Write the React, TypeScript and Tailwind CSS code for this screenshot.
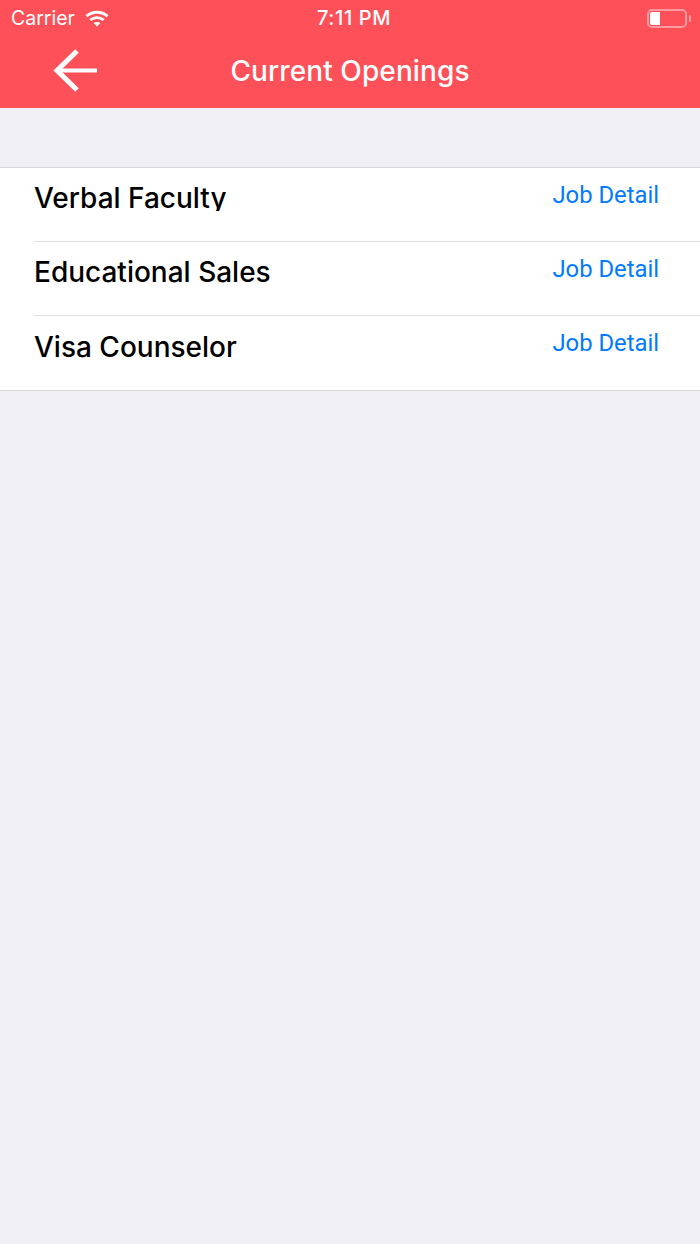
const jobs = ["Verbal Faculty", "Educational Sales", "Visa Counselor"]

function WifiIcon() {
  return (
    <svg width="24" height="17" viewBox="0 0 24 17" fill="none" stroke="white" strokeWidth="2.8">
      <path d="M1.5 6.2C7.4 .9 16.6 .9 22.5 6.2" />
      <path d="M5.3 10C9.1 6.7 14.9 6.7 18.7 10" />
      <path d="M12 16.4L8.6 13C10.5 11.5 13.5 11.5 15.4 13Z" fill="white" stroke="none" />
    </svg>
  )
}

function BatteryIcon() {
  return (
    <div className="flex items-center gap-[2px]">
      <div className="h-[19px] w-[40px] rounded-[5px] border-2 border-[#ff9aa1] p-[1px]">
        <div className="h-full w-[10px] rounded-l-[2px] bg-white" />
      </div>
      <div className="h-[7px] w-[2px] rounded-r-full bg-[#ff9aa1]" />
    </div>
  )
}

function BackArrow() {
  return (
    <svg width="44" height="44" viewBox="0 0 44 44" fill="none" stroke="white">
      <path d="M44 22.5H4" strokeWidth="4" />
      <path d="M24 3L4 22.5L24 42" strokeWidth="5" />
    </svg>
  )
}

export default function App() {
  return (
    <div className="flex min-h-[1244px] flex-col bg-[#efeff4] font-['Inter',sans-serif]">
      <header className="h-[108px] bg-[#fd5058] text-white">
        <div className="flex h-[36px] items-center justify-between pl-[11px] pr-[9px]">
          <div className="flex flex-1 items-center gap-[10px]">
            <span className="pt-[1px] text-[19.5px] font-normal">Carrier</span>
            <WifiIcon />
          </div>
          <span className="ml-[6px] text-[20px] font-medium tracking-[0.6px]">7:11 PM</span>
          <div className="flex flex-1 justify-end">
            <BatteryIcon />
          </div>
        </div>
        <div className="relative flex h-[72px] items-center justify-center pb-[2px]">
          <div className="absolute left-[53px] top-[12px]">
            <BackArrow />
          </div>
          <h1 className="text-[28px] font-medium tracking-[0.1px]">Current Openings</h1>
        </div>
      </header>

      <ul className="mt-[59px] border-y border-[#d9d9dd] bg-white">
        {jobs.map((job, i) => (
          <li key={job} className="pl-[34px]">
            <div
              className={`flex h-[74px] justify-between overflow-hidden pr-[41px] ${
                i < jobs.length - 1 ? "border-b border-[#dfdfe2]" : ""
              }`}
            >
              <span
                className={`text-[28px] font-[525] leading-[34px] text-black ${
                  i === 0 ? "mt-[13px] h-[30px] overflow-hidden" : i === 2 ? "mt-[14px]" : "mt-[13px]"
                }`}
              >
                {job}
              </span>
              <span className="mt-[11px] font-['Roboto',sans-serif] text-[23.8px] leading-[32px] text-[#007aff]">
                Job Detail
              </span>
            </div>
          </li>
        ))}
      </ul>
    </div>
  )
}
